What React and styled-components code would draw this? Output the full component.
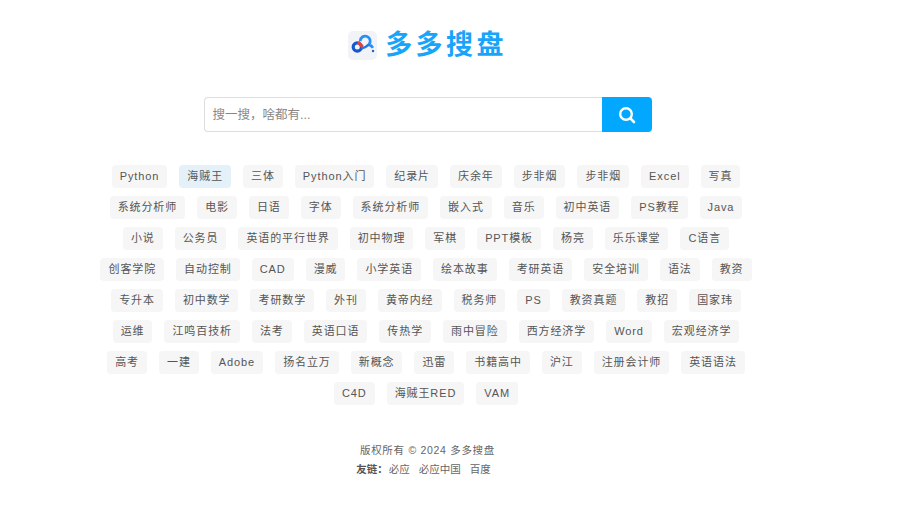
import React from 'react';
import styled, { createGlobalStyle } from 'styled-components';

const GlobalStyle = createGlobalStyle`
  html, body {
    margin: 0;
    padding: 0;
    background: #fff;
    font-family: "Liberation Sans", "Noto Sans CJK SC", sans-serif;
  }
`;

const Page = styled.div`
  width: 855px;
  height: 515px;
  display: flex;
  flex-direction: column;
  align-items: center;
  overflow: hidden;
`;

const Logo = styled.div`
  display: flex;
  align-items: center;
  gap: 8px;
  margin-top: 27px;
  height: 36px;
`;

const LogoIcon = styled.div`
  width: 29px;
  height: 29px;
  border-radius: 5px;
  background: #f1f3f6;
  display: flex;
  align-items: center;
  justify-content: center;
`;

const LogoText = styled.div`
  font-size: 27px;
  font-weight: 700;
  letter-spacing: 3.4px;
  line-height: 36px;
  color: #18a4fb;
  white-space: nowrap;
`;

const SearchForm = styled.form`
  display: flex;
  width: 448px;
  height: 35px;
  margin: 34px 0 33px;
`;

const SearchInput = styled.input`
  flex: 1;
  min-width: 0;
  box-sizing: border-box;
  height: 35px;
  padding: 0 8px;
  border: 1px solid #ddd;
  border-right: none;
  border-radius: 4px 0 0 4px;
  outline: none;
  font: 12.5px "Liberation Sans", "Noto Sans CJK SC", sans-serif;
  color: #555;

  &::placeholder {
    color: #888;
    opacity: 1;
  }
`;

const SearchButton = styled.button`
  width: 50px;
  height: 35px;
  padding: 0;
  border: none;
  border-radius: 0 4px 4px 0;
  background: #02a7ff;
  display: flex;
  align-items: center;
  justify-content: center;
`;

const TagCloud = styled.div`
  width: 670px;
  margin-right: 3px;
  display: flex;
  flex-wrap: wrap;
  justify-content: center;
  gap: 8px 12px;
`;

const Tag = styled.a`
  height: 23px;
  line-height: 23px;
  padding: 0 8px;
  border-radius: 4px;
  font-size: 11px;
  letter-spacing: 0.9px;
  white-space: nowrap;
  color: #555;
  background: ${props => (props.$active ? '#e4f1f9' : '#f6f6f6')};
`;

const Footer = styled.footer`
  margin-top: 36px;
  text-align: center;
  font-size: 10.5px;
  line-height: 19px;
  color: #666;
`;

const Copyright = styled.div`
  letter-spacing: 0.7px;
`;

const FriendLinks = styled.div`
  display: flex;
  justify-content: center;
  gap: 9px;
  padding-right: 8px;
`;

const FriendLabel = styled.b`
  color: #555;
  margin-right: -8px;
`;

const tags = [
  'Python', '海贼王', '三体', 'Python入门', '纪录片', '庆余年', '步非烟', '步非烟', 'Excel', '写真',
  '系统分析师', '电影', '日语', '字体', '系统分析师', '嵌入式', '音乐', '初中英语', 'PS教程', 'Java',
  '小说', '公务员', '英语的平行世界', '初中物理', '军棋', 'PPT模板', '杨亮', '乐乐课堂', 'C语言',
  '创客学院', '自动控制', 'CAD', '漫威', '小学英语', '绘本故事', '考研英语', '安全培训', '语法', '教资',
  '专升本', '初中数学', '考研数学', '外刊', '黄帝内经', '税务师', 'PS', '教资真题', '教招', '国家玮',
  '运维', '江鸣百技析', '法考', '英语口语', '传热学', '雨中冒险', '西方经济学', 'Word', '宏观经济学',
  '高考', '一建', 'Adobe', '扬名立万', '新概念', '迅雷', '书籍高中', '沪江', '注册会计师', '英语语法',
  'C4D', '海贼王RED', 'VAM',
];

function LogoMark() {
  return (
    <svg width="25" height="25" viewBox="0 0 25 25" fill="none">
      <path d="M10.2 8.2 A5 5 0 1 1 18.8 11.6 Q21.8 12.6 22.8 14.8" stroke="#2a8ff2" strokeWidth="2.8" />
      <circle cx="7.3" cy="14" r="4.1" stroke="#1358cf" strokeWidth="3.2" />
      <path d="M8 9.2 L12.6 13.8" stroke="#e8413c" strokeWidth="3.2" />
      <path d="M11.5 15.5 Q15 15 18.8 11.6" stroke="#1f7ae6" strokeWidth="2.6" />
      <circle cx="23" cy="18" r="1.2" fill="#1c5fd4" />
    </svg>
  );
}

function SearchIcon() {
  return (
    <svg width="18" height="18" viewBox="0 0 18 18" fill="none">
      <circle cx="8" cy="8" r="5.8" stroke="#fff" strokeWidth="2.4" />
      <path d="M12.5 12.5 L16 16" stroke="#fff" strokeWidth="2.6" strokeLinecap="round" />
    </svg>
  );
}

export default function App() {
  return (
    <Page>
      <GlobalStyle />
      <Logo>
        <LogoIcon><LogoMark /></LogoIcon>
        <LogoText>多多搜盘</LogoText>
      </Logo>

      <SearchForm onSubmit={(e) => e.preventDefault()}>
        <SearchInput type="text" placeholder="搜一搜，啥都有..." />
        <SearchButton type="submit" aria-label="搜索"><SearchIcon /></SearchButton>
      </SearchForm>

      <TagCloud>
        {tags.map((tag, i) => (
          <Tag key={i} $active={tag === '海贼王'}>{tag}</Tag>
        ))}
      </TagCloud>

      <Footer>
        <Copyright>版权所有 © 2024 多多搜盘</Copyright>
        <FriendLinks>
          <FriendLabel>友链：</FriendLabel>
          <span>必应</span>
          <span>必应中国</span>
          <span>百度</span>
        </FriendLinks>
      </Footer>
    </Page>
  );
}
